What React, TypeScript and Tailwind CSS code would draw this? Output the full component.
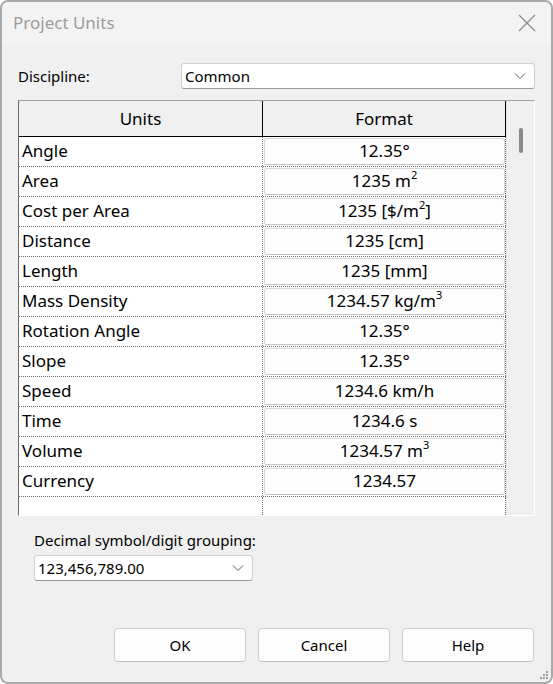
import React from "react";

const Sup = ({ c }: { c: string }) => (
  <span className="relative -top-[7px] text-[11px] leading-none">{c}</span>
);

const rows: [string, React.ReactNode][] = [
  ["Angle", <>12.35°</>],
  ["Area", <>1235 m<Sup c="2" /></>],
  ["Cost per Area", <>1235 [$/m<Sup c="2" />]</>],
  ["Distance", <>1235 [cm]</>],
  ["Length", <>1235 [mm]</>],
  ["Mass Density", <>1234.57 kg/m<Sup c="3" /></>],
  ["Rotation Angle", <>12.35°</>],
  ["Slope", <>12.35°</>],
  ["Speed", <>1234.6 km/h</>],
  ["Time", <>1234.6 s</>],
  ["Volume", <>1234.57 m<Sup c="3" /></>],
  ["Currency", <>1234.57</>],
];

const Chevron = () => (
  <svg width="12" height="8" viewBox="0 0 12 8" fill="none">
    <path d="M1 1.5 L6 6.5 L11 1.5" stroke="#5a5a5a" strokeWidth="1" />
  </svg>
);

export default function App() {
  return (
    <div
      className="w-[553px] h-[684px] bg-white text-black"
      style={{ fontFamily: '"Noto Sans", "Open Sans", sans-serif' }}
    >
      <div className="relative w-full h-full rounded-[8px] border-2 border-[#a9a9a9] bg-[#f0f0f0] flex flex-col overflow-hidden">
        {/* title bar */}
        <div className="h-[42px] shrink-0 bg-[#f3f3f3] flex items-center justify-between pl-[11px] pr-[15px]">
          <span className="text-[17px] text-[#9c9c9c]">Project Units</span>
          <svg width="18" height="18" viewBox="0 0 18 18">
            <path d="M1 1 L17 17 M17 1 L1 17" stroke="#8c8c8c" strokeWidth="1.2" />
          </svg>
        </div>

        <div className="flex flex-col pl-[16px] pr-[16px] text-[15px]">
          {/* discipline */}
          <div className="mt-[19px] flex items-center justify-between h-[26px]">
            <span>Discipline:</span>
            <div className="w-[354px] h-[26px] bg-white border border-[#cfcfcf] border-b-[#9a9a9a] rounded-[3px] flex items-center justify-between pl-[3px] pr-[8px]">
              <span>Common</span>
              <Chevron />
            </div>
          </div>

          {/* table frame */}
          <div className="mt-[11px] w-[517px] h-[416px] border-t border-l border-t-[#a0a0a0] border-l-[#6a6a6a] border-r border-b border-r-white border-b-white flex bg-[#f0f0f0]">
            <div className="w-[487px] flex flex-col bg-white overflow-hidden text-[17px]">
              <div className="h-[36px] shrink-0 flex bg-[#f0f0f0] border-b border-black">
                <div className="w-[244px] border-r border-black flex items-center justify-center">
                  Units
                </div>
                <div className="w-[243px] border-r border-black flex items-center justify-center">
                  Format
                </div>
              </div>
              {rows.map(([name, fmt]) => (
                <div key={name} className="h-[30px] shrink-0 flex border-b border-dotted border-[#6f6f6f]">
                  <div className="w-[244px] border-r border-dotted border-[#6f6f6f] flex items-center pl-[3px] pb-[2px]">
                    {name}
                  </div>
                  <div className="w-[243px] border-r border-dotted border-[#6f6f6f] pl-[1px] pr-[0px] pt-[1px] pb-[1px] flex">
                    <div className="flex-1 bg-[#fdfdfd] border border-[#d6d6d6] border-b-[#c2c2c2] rounded-[3px] flex items-center justify-center pb-[1px]">
                      {fmt}
                    </div>
                  </div>
                </div>
              ))}
              <div className="flex-1 flex">
                <div className="w-[244px] border-r border-dotted border-[#6f6f6f]" />
                <div className="w-[243px] border-r border-dotted border-[#6f6f6f]" />
              </div>
            </div>
            <div className="flex-1 border-l border-[#e6e6e6] bg-[#efefef] flex justify-center pt-[27px]">
              <div className="w-[4px] h-[25px] rounded-full bg-[#8a8a8a]" />
            </div>
          </div>

          {/* decimal */}
          <div className="mt-[14px] pl-[16px] flex flex-col">
            <span className="leading-[20px]">Decimal symbol/digit grouping:</span>
            <div className="mt-[5px] w-[219px] h-[26px] bg-white border border-[#cfcfcf] border-b-[#9a9a9a] rounded-[3px] flex items-center justify-between pl-[3px] pr-[8px]">
              <span>123,456,789.00</span>
              <Chevron />
            </div>
          </div>

          {/* buttons */}
          <div className="mt-[47px] flex justify-end gap-[12px] pr-[1px]">
            {["OK", "Cancel", "Help"].map((b) => (
              <div
                key={b}
                className="w-[132px] h-[34px] bg-[#fdfdfd] border border-[#d0d0d0] border-b-[#bdbdbd] rounded-[4px] flex items-center justify-center"
              >
                {b}
              </div>
            ))}
          </div>
        </div>

        {/* resize grip */}
        <svg className="absolute right-[2px] bottom-[2px]" width="10" height="10" viewBox="0 0 10 10">
          <rect x="7" y="1" width="2" height="2" fill="#9a9a9a" />
          <rect x="4" y="4" width="2" height="2" fill="#9a9a9a" />
          <rect x="7" y="4" width="2" height="2" fill="#9a9a9a" />
          <rect x="1" y="7" width="2" height="2" fill="#9a9a9a" />
          <rect x="4" y="7" width="2" height="2" fill="#9a9a9a" />
          <rect x="7" y="7" width="2" height="2" fill="#9a9a9a" />
        </svg>
      </div>
    </div>
  );
}
